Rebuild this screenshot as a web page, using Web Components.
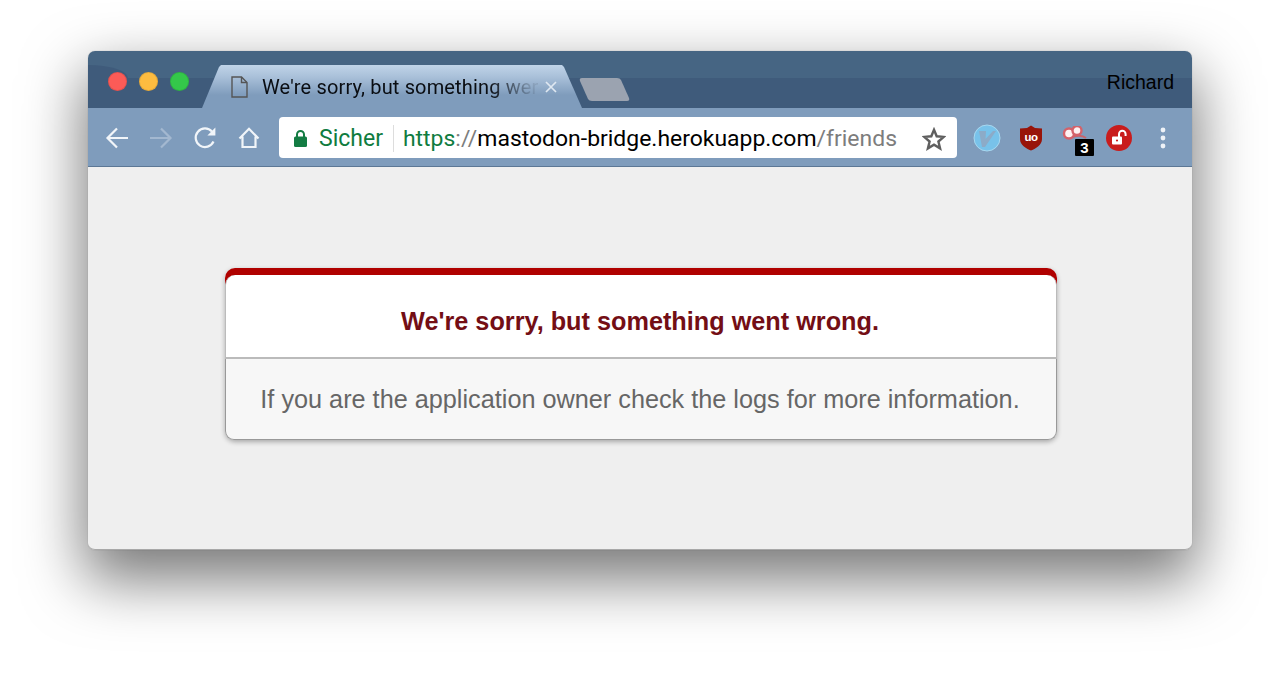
<!DOCTYPE html>
<html>
<head>
<meta charset="utf-8">
<title>We're sorry, but something went wrong</title>
<style>
  html, body { margin: 0; height: 100%; background: #fff; overflow: hidden; }
  body { padding: 51px 88px 0; box-sizing: border-box; font-family: Roboto, "Liberation Sans", sans-serif; }
</style>
</head>
<body>
<browser-window>
  <tab-strip slot="strip" user="Richard">
    <browser-tab title-text="We're sorry, but something wer"></browser-tab>
  </tab-strip>
  <tool-bar slot="toolbar"></tool-bar>
  <error-card
    heading="We're sorry, but something went wrong."
    hint="If you are the application owner check the logs for more information."></error-card>
</browser-window>

<script>
class BrowserWindow extends HTMLElement {
  constructor () {
    super();
    this.attachShadow({ mode: 'open' }).innerHTML = `
    <style>
      :host { display: flex; flex-direction: column; width: 1104px; height: 499px; border-radius: 7px;
        box-shadow: 0 0 1px rgba(0,0,0,.35), 0 26px 60px 4px rgba(0,0,0,.53); background: #efefef; }
      .page { flex: 1; display: flex; flex-direction: column; align-items: center; padding: 101px 0 0 2px;
        background: #efefef; border-radius: 0 0 7px 7px; border-bottom: 1px solid #a8a8a8; box-sizing: border-box; min-height: 0; }
    </style>
    <slot name="strip"></slot>
    <slot name="toolbar"></slot>
    <div class="page"><slot></slot></div>`;
  }
}

class TabStrip extends HTMLElement {
  constructor () {
    super();
    this.attachShadow({ mode: 'open' }).innerHTML = `
    <style>
      :host { display: flex; height: 57px; padding-left: 20px; box-sizing: border-box; position: relative;
        border-radius: 7px 7px 0 0; color: #000;
        background: linear-gradient(#466583 0, #466583 27px, #3f5b7b 27px, #3f5b7b 100%); }
      :host::before { content: ""; position: absolute; left: 0; top: 14px; width: 40px; height: 13px;
        background: #3f5b7b; border-radius: 0 100% 0 0; }
      .lights { display: flex; gap: 12.5px; padding-top: 21px; position: relative; }
      .lights i { display: block; width: 18.5px; height: 18.5px; border-radius: 50%; box-sizing: border-box; border: 1px solid rgba(0,0,0,.1); }
      .ghost { width: 52px; height: 25px; margin: 26px 0 0 -3px; display: block; }
      .user { margin-left: auto; padding: 20px 18px 0 0; font: 19.5px/22px "Liberation Sans", sans-serif; }
    </style>
    <div class="lights">
      <i style="background:#fc5b57"></i><i style="background:#fdbc40"></i><i style="background:#34c84a"></i>
    </div>
    <slot></slot>
    <svg class="ghost" viewBox="0 0 52 25"><path d="M3 1H38Q41 1 42 3L50 21Q51 24 48 24H13Q10 24 9 22L1 4Q0 1 3 1Z" fill="#9ba3b0"/></svg>
    <span class="user"></span>`;
  }

  connectedCallback () {
    this.shadowRoot.querySelector('.user').textContent = this.getAttribute('user');
  }
}

class BrowserTab extends HTMLElement {
  constructor () {
    super();
    this.attachShadow({ mode: 'open' }).innerHTML = `
    <style>
      :host { display: flex; align-items: center; width: 380px; height: 43px; margin: 14px 0 0 13.5px; box-sizing: border-box;
        padding: 1px 24px 0 29px; flex: none; position: relative;
        clip-path: polygon(0 100%, 17px 2px, 19px 0, 360px 0, 362px 2px, 380px 100%);
        background: linear-gradient(#c0d4e8 0, #a9c0d9 12px, #7f9cbc 30px, #7f9cbc 100%); }
      svg { flex: none; width: 17px; height: 22px; }
      .title { flex: none; width: 276px; margin-left: 14px; white-space: nowrap; font-size: 20px; letter-spacing: .15px; line-height: 24px; color: #0a0d12;
        -webkit-mask-image: linear-gradient(90deg, #000 82%, rgba(0,0,0,.1) 98%); }
      .close { flex: none; width: 14px; height: 14px; margin-left: 6px; }
    </style>
    <svg viewBox="0 0 17 22" fill="none" stroke="#555" stroke-width="1.4"><path d="M1 1H10.5L16 6.5V21H1Z"/><path d="M10.5 1V6.5H16"/></svg>
    <span class="title"></span>
    <svg class="close" viewBox="0 0 14 14" stroke="#dfe8f1" stroke-width="1.7"><path d="M2 2L12 12M12 2L2 12"/></svg>`;
  }

  connectedCallback () {
    this.shadowRoot.querySelector('.title').textContent = this.getAttribute('title-text');
  }
}

class ToolBar extends HTMLElement {
  constructor () {
    super();
    this.attachShadow({ mode: 'open' }).innerHTML = `
    <style>
      :host { display: flex; align-items: center; height: 59px; padding: 1px 7px 0; box-sizing: border-box; background: #7f9cbc;
        border-bottom: 1px solid #5c7795; }
      .btn { flex: none; width: 44px; height: 44px; padding-top: 1px; box-sizing: border-box; display: flex; align-items: center; justify-content: center; position: relative; }
      .btn svg { display: block; }
      .badge { position: absolute; left: 22px; top: 23px; width: 19px; height: 17px; background: #000; color: #fff; border-radius: 1px;
        font: bold 15px/17px "Liberation Sans", sans-serif; text-align: center; }
    </style>
    <div class="btn"><svg width="24" height="24" viewBox="0 0 24 24" fill="none" stroke="#f1f5f9" stroke-width="2.2"><path d="M23 12H3M12 2.5L2.5 12L12 21.5"/></svg></div>
    <div class="btn"><svg width="24" height="24" viewBox="0 0 24 24" fill="none" stroke="#a3b8d0" stroke-width="2.2"><path d="M1 12H21M12 2.5L21.5 12L12 21.5"/></svg></div>
    <div class="btn"><svg width="24" height="24" viewBox="0 0 24 24" fill="none" stroke="#f1f5f9" stroke-width="2.2"><path d="M20.5 15.5A9.3 9.3 0 1 1 19 5.6"/><path d="M22.4 1.5V9.5H14.4Z" fill="#f1f5f9" stroke="none"/></svg></div>
    <div class="btn"><svg width="24" height="24" viewBox="0 0 24 24" fill="none" stroke="#f1f5f9" stroke-width="2.2"><path d="M2.5 12.5L12 2.8L21.5 12.5M5.5 10.5V21H18.5V10.5"/></svg></div>
    <address-bar></address-bar>
    <div class="btn" style="margin-left:8px"><svg width="28" height="28" viewBox="0 0 28 28"><circle cx="14" cy="14" r="13" fill="#78c2ea" stroke="#a8d8f0" stroke-width="1"/><path d="M6 7H13L12.500 15L20 7H23L12 23H9Z" fill="#8cabc8"/></svg></div>
    <div class="btn"><svg width="24" height="26" viewBox="0 0 24 26"><path d="M12 0.500L16 3L23 3.500V14C23 20 17 23.500 12 25.500C7 23.500 1 20 1 14V3.500L8 3Z" fill="#981409"/><text x="12" y="16" text-anchor="middle" fill="#fff" font-family="Liberation Sans" font-weight="700" font-size="11.500" letter-spacing="-.4">uo</text></svg></div>
    <div class="btn"><svg width="28" height="24" viewBox="0 0 28 24"><path d="M11 11Q20 8 25 12" fill="none" stroke="#c9636a" stroke-width="2"/><circle cx="8" cy="7.500" r="5" fill="#fff2f2" stroke="#d4626a" stroke-width="2.400"/><circle cx="16" cy="4.500" r="4.500" fill="#fff2f2" stroke="#d4626a" stroke-width="2.400"/></svg><span class="badge">3</span></div>
    <div class="btn"><svg width="26" height="26" viewBox="0 0 26 26"><circle cx="13" cy="13" r="13" fill="#c91c1c"/><rect x="6" y="11.500" width="10" height="8" rx="1" fill="#fff"/><path d="M13 12V9A3.300 3.300 0 0 1 19.600 9V11" fill="none" stroke="#fff" stroke-width="2"/><circle cx="11" cy="15.500" r="1.100" fill="#c91c1c"/></svg></div>
    <div class="btn"><svg width="6" height="22" viewBox="0 0 6 22" fill="#eef2f7"><circle cx="3" cy="3" r="2.400"/><circle cx="3" cy="11" r="2.400"/><circle cx="3" cy="19" r="2.400"/></svg></div>`;
  }
}

class AddressBar extends HTMLElement {
  constructor () {
    super();
    this.attachShadow({ mode: 'open' }).innerHTML = `
    <style>
      :host { flex: none; display: flex; align-items: center; width: 678px; height: 41px; margin-left: 8px; padding: 2px 11px 0 15px; box-sizing: border-box;
        background: #fff; border-radius: 4px; font-size: 23px; white-space: nowrap; }
      .lock { flex: none; width: 13px; height: 17px; }
      .secure { color: #0f7c3f; margin-left: 12px; }
      .sep { flex: none; width: 1px; height: 27px; margin: 0 9px 0 10px; background: #ddd; }
      .url { flex: 1; color: #000; font-size: 22.950px; }
      .scheme { color: #0f7c3f; }
      .dim { color: #7d7d7d; }
      .star { flex: none; width: 24px; height: 24px; }
    </style>
    <svg class="lock" viewBox="0 0 13 17"><rect y="6.500" width="13" height="10.500" rx="1.500" fill="#137c43"/><path d="M3 7V4.500A3.500 3.500 0 0 1 10 4.500V7" fill="none" stroke="#137c43" stroke-width="2"/></svg>
    <span class="secure">Sicher</span>
    <span class="sep"></span>
    <span class="url"><span class="scheme">https</span><span class="dim">://</span>mastodon-bridge.herokuapp.com<span class="dim">/friends</span></span>
    <svg class="star" viewBox="0 0 24 24" fill="none" stroke="#5f5f5f" stroke-width="2.400" stroke-linejoin="miter"><path d="M12 2.800L14.700 9.300L21.800 9.900L16.400 14.500L18.100 21.400L12 17.700L5.900 21.400L7.600 14.500L2.200 9.900L9.300 9.300Z"/></svg>`;
  }
}

class ErrorCard extends HTMLElement {
  constructor () {
    super();
    this.attachShadow({ mode: 'open' }).innerHTML = `
    <style>
      :host { display: block; width: 832px; font-family: "Liberation Sans", Arial, sans-serif; border-radius: 10px;
        box-shadow: 0 2px 5px rgba(0,0,0,.3); background: linear-gradient(#b00100 18px, #f7f7f7 18px); padding-top: 7px; box-sizing: border-box; }
      .top { height: 84px; box-sizing: border-box; background: #fff; border: 1px solid #bbb; border-top: 0; border-bottom: 2px solid #bbb;
        border-radius: 10px 10px 0 0; display: flex; align-items: center; justify-content: center; padding: 10px 2px 0 0; }
      h1 { margin: 0; font-size: 25.250px; line-height: 32px; color: #730e15; }
      .bottom { height: 81px; box-sizing: border-box; background: #f7f7f7; border: 1px solid #999; border-top: 0; border-radius: 0 0 9px 9px;
        display: flex; align-items: center; justify-content: center; padding-right: 2px; }
      p { margin: 0; font-size: 25.250px; line-height: 32px; color: #666; }
    </style>
    <div class="top"><h1></h1></div>
    <div class="bottom"><p></p></div>`;
  }

  connectedCallback () {
    this.shadowRoot.querySelector('h1').textContent = this.getAttribute('heading');
    this.shadowRoot.querySelector('p').textContent = this.getAttribute('hint');
  }
}

customElements.define('browser-window', BrowserWindow);
customElements.define('tab-strip', TabStrip);
customElements.define('browser-tab', BrowserTab);
customElements.define('tool-bar', ToolBar);
customElements.define('address-bar', AddressBar);
customElements.define('error-card', ErrorCard);
</script>
</body>
</html>
